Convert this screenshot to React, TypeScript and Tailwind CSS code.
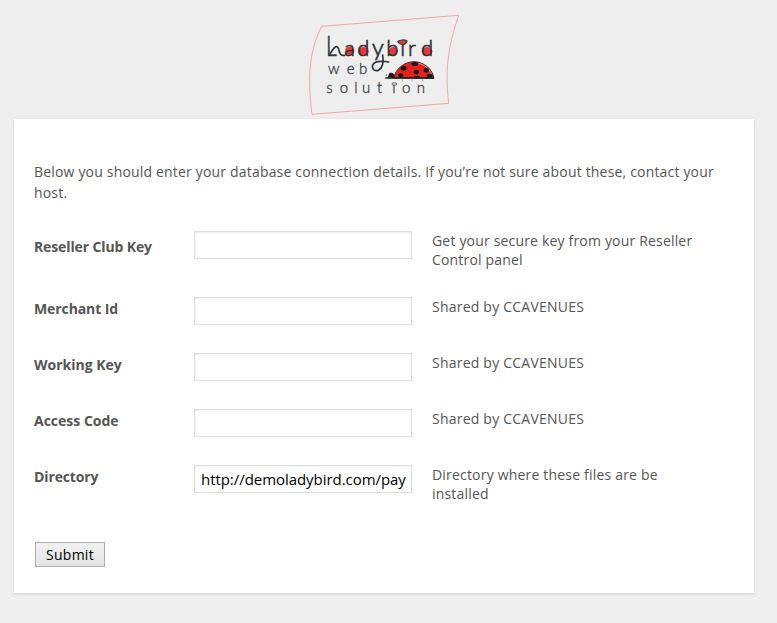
type Field = {
  id: string;
  label: string;
  hint: string;
  value?: string;
  rowClass: string;
  labelClass: string;
  hintClass: string;
};

const fields: Field[] = [
  { id: 'reseller', label: 'Reseller Club Key', hint: 'Get your secure key from your Reseller Control panel', rowClass: 'h-[66px]', labelClass: 'pt-[6px] tracking-[-0.12px]', hintClass: 'tracking-[0.18px]' },
  { id: 'merchant', label: 'Merchant Id', hint: 'Shared by CCAVENUES', rowClass: 'h-14', labelClass: 'pt-[2px] tracking-[-0.1px]', hintClass: 'tracking-[0.22px]' },
  { id: 'working', label: 'Working Key', hint: 'Shared by CCAVENUES', rowClass: 'h-14', labelClass: 'pt-[2px]', hintClass: 'tracking-[0.22px]' },
  { id: 'access', label: 'Access Code', hint: 'Shared by CCAVENUES', rowClass: 'h-14', labelClass: 'pt-[2px]', hintClass: 'tracking-[0.22px]' },
  { id: 'directory', label: 'Directory', hint: 'Directory where these files are be installed', value: 'http://demoladybird.com/pay', rowClass: 'h-[66px]', labelClass: 'pt-[2px] tracking-[-0.12px]', hintClass: 'tracking-[0.19px]' },
];

function Ladybird() {
  return (
    <g>
      <path d="M280 219 C288 190 314 169 345 170 C374 172 398 194 402 220 Z" fill="#e6221f" stroke="#1c1c1c" strokeWidth="2.5" />
      <path d="M356 175 C376 180 389 193 395 208" fill="none" stroke="#f9b9a8" strokeWidth="2" />
      <g fill="#161616">
        <ellipse cx="344" cy="177" rx="10" ry="6" />
        <ellipse cx="311" cy="190" rx="9" ry="7" />
        <ellipse cx="349" cy="201" rx="8" ry="7" />
        <ellipse cx="379" cy="196" rx="8" ry="7" />
        <ellipse cx="302" cy="211" rx="8" ry="6" />
        <ellipse cx="351" cy="216" rx="9" ry="4" />
        <ellipse cx="389" cy="212" rx="9" ry="6" />
        <path d="M264 217 C262 203 274 200 281 207 L286 219 Z" />
      </g>
      <circle cx="261" cy="209" r="5" fill="#fff" />
      <circle cx="259" cy="210" r="2" fill="#222" />
      <path d="M256 219 H402" stroke="#1c1c1c" strokeWidth="4" />
      <path d="M307 221 v9 m29 -9 v8 m32 -8 v9" stroke="#9c9c9c" strokeWidth="2.5" />
    </g>
  );
}

function Logo() {
  return (
    <svg className="block h-[115px] w-[170px] font-['Lato',sans-serif]" viewBox="0 0 510 345" role="img" aria-label="Ladybird web solution">
      <path d="M65 64 L476 31 C451 105 432 180 446 295 L36 328 C23 225 25 143 65 64 Z" fill="none" stroke="#f09a9a" strokeWidth="2.5" />
      <g fill="#ee3434">
        <ellipse cx="149" cy="138" rx="14" ry="13" />
        <ellipse cx="191" cy="139" rx="15" ry="13" />
        <ellipse cx="280" cy="139" rx="13" ry="13" />
        <ellipse cx="382" cy="139" rx="15" ry="13" />
      </g>
      <path d="M293 110 C299 103 315 104 321 108 C318 120 302 123 293 110 Z" fill="#ee3434" stroke="#333c40" strokeWidth="3.5" />
      <path d="M89 148 C99 131 110 117 115 130 C119 142 119 153 134 151" fill="none" stroke="#2d3538" strokeWidth="5" strokeLinecap="round" />
      <path d="M248 150 C256 205 217 205 217 184 C219 169 243 166 266 171" fill="none" stroke="#2d3538" strokeWidth="5" strokeLinecap="round" />
      <g fill="#2d3538" stroke="#2d3538" className="font-light">
        <text y="153" fontSize="82" strokeWidth="2">
          <tspan x="78" textLength="32" lengthAdjust="spacingAndGlyphs">L</tspan>
          <tspan x="133" fontSize="66">a</tspan>
          <tspan x="172" fontSize="66">d</tspan>
          <tspan x="216" fontSize="70">y</tspan>
          <tspan x="259" fontSize="66">b</tspan>
          <tspan x="301" fontSize="66">ı</tspan>
          <tspan x="324" fontSize="66">r</tspan>
          <tspan x="363" fontSize="66">d</tspan>
        </text>
      </g>
      <g fill="#3a4144" stroke="#3a4144" strokeWidth="1" className="font-light">
        <text y="206" x="84 140 177" fontSize="45">web</text>
        <text y="263" x="79 119 163 186 231 277 306 350" fontSize="45">solutıon</text>
      </g>
      <ellipse cx="283" cy="237" rx="7" ry="4" fill="none" stroke="#444b4e" strokeWidth="2.5" />
      <Ladybird />
    </svg>
  );
}

export default function App() {
  return (
    <div className="h-[623px] w-[777px] overflow-hidden bg-[#eeeeee] pl-[14px] font-['Open_Sans',sans-serif] text-sm text-[#555555]">
      <header className="h-[119px] pl-[286px] pt-[5px]">
        <Logo />
      </header>
      <main className="h-[474px] w-[740px] bg-white px-5 pt-[42px] shadow-[0_1px_3px_rgba(0,0,0,0.13)]">
        <p className="h-[60px] leading-[21px] tracking-[0.18px]">
          Below you should enter your database connection details. If you’re not sure about these, contact your host.
        </p>
        <form>
          {fields.map((f) => (
            <div key={f.id} className={`grid grid-cols-[160px_238px_270px] items-start pt-[10px] ${f.rowClass}`}>
              <label htmlFor={f.id} className={`font-bold leading-[19px] ${f.labelClass}`}>
                {f.label}
              </label>
              <input
                id={f.id}
                type="text"
                defaultValue={f.value ?? ''}
                className="h-7 w-[218px] border border-[#dddddd] bg-white pl-[6px] pr-[3px] text-[15px] tracking-[-0.05px] text-black shadow-[inset_0_1px_2px_rgba(0,0,0,0.07)] outline-none"
              />
              <p className={`leading-[19px] ${f.hintClass}`}>{f.hint}</p>
            </div>
          ))}
          <button
            type="button"
            className="ml-px mt-[21px] flex h-[25px] w-[70px] items-center justify-center border border-[#acacac] bg-linear-to-b from-[#f1f1f1] to-[#e4e4e4] tracking-[0.25px] text-black"
          >
            Submit
          </button>
        </form>
      </main>
    </div>
  );
}
